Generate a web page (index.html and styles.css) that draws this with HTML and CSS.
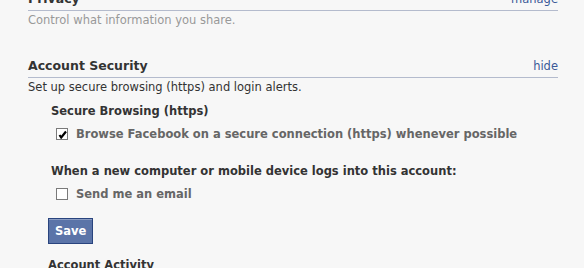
FILE: index.html
```html
<!DOCTYPE html>
<html lang="en">
<head>
    <meta charset="UTF-8">
    <title>Account Settings</title>
    <link rel="stylesheet" href="styles.css">
</head>
<body>
    <div class="settings">
        <div class="section">
            <div class="section-head">
                <h2>Privacy</h2>
                <a href="#">manage</a>
            </div>
            <p class="desc muted">Control what information you share.</p>
        </div>

        <div class="section">
            <div class="section-head">
                <h2>Account Security</h2>
                <a href="#">hide</a>
            </div>
            <p class="desc">Set up secure browsing (https) and login alerts.</p>

            <div class="panel">
                <h3>Secure Browsing (https)</h3>
                <label class="option">
                    <span class="box">
                        <svg width="9" height="9" viewBox="0 0 9 9"><path d="M1.5 5 L3.2 7.5 L8 1.5" fill="none" stroke="#000" stroke-width="2.2"/></svg>
                    </span>
                    Browse Facebook on a secure connection (https) whenever possible
                </label>

                <h3 class="spaced">When a new computer or mobile device logs into this account:</h3>
                <label class="option">
                    <span class="box"></span>
                    Send me an email
                </label>

                <button class="save">Save</button>

                <h3 class="next">Account Activity</h3>
            </div>
        </div>
    </div>
</body>
</html>
```

FILE: styles.css
```css
html, body {
    margin: 0;
    background-color: #f7f7f7;
}
body {
    font-family: "DejaVu Sans", Verdana, sans-serif;
    font-size: 11.5px;
    color: #333;
    overflow: hidden;
    height: 268px;
}
.settings {
    width: 530px;
    margin-left: 28px;
    margin-top: -10px;
}
.section {
    margin-bottom: 30px;
}
.section-head {
    display: flex;
    justify-content: space-between;
    align-items: flex-end;
    border-bottom: 1px solid #b4bbcd;
    padding-bottom: 2px;
}
.section-head h2 {
    margin: 0;
    font-size: 12.5px;
    font-weight: bold;
    color: #333;
    line-height: 18px;
}
.section-head a {
    color: #3b5998;
    text-decoration: none;
    line-height: 18px;
}
.desc {
    margin: 2px 0 0;
    line-height: 14px;
}
.muted {
    color: #999;
}
.panel {
    padding-left: 23px;
    padding-top: 10px;
}
.panel h3 {
    margin: 0;
    font-size: 11.5px;
    font-weight: bold;
    color: #333;
    line-height: 14px;
}
.panel h3.spaced {
    margin-top: 23px;
}
.option {
    display: flex;
    align-items: center;
    gap: 8px;
    margin-top: 9px;
    padding-left: 5px;
    font-weight: bold;
    color: #666;
    line-height: 14px;
}
.box {
    display: flex;
    align-items: center;
    justify-content: center;
    width: 10px;
    height: 10px;
    border: 1px solid #7a7a7a;
    background: #fff;
}
.save {
    display: block;
    margin-top: 17px;
    margin-left: -3px;
    font-family: inherit;
    font-size: 11.5px;
    font-weight: bold;
    color: #fff;
    background-color: #5b74a8;
    border: 1px solid #29447e;
    padding: 5px 6px 5px;
    box-shadow: inset 0 1px 0 #8a9cc2;
    line-height: 14px;
}
.panel h3.next {
    margin-top: 14px;
    margin-left: -3px;
}
```
